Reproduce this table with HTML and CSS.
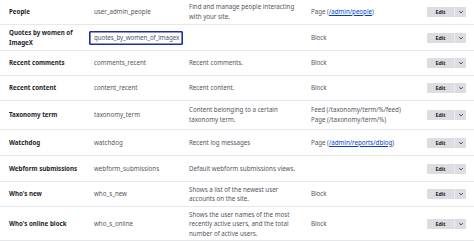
FILE: index.html
```html
<!DOCTYPE html>
<html lang="en">
<head>
  <meta charset="UTF-8">
  <title>Views</title>
  <link rel="stylesheet" href="styles.css">
</head>
<body>
  <table class="views-list">
    <colgroup>
      <col class="c-name">
      <col class="c-machine">
      <col class="c-desc">
      <col class="c-path">
      <col class="c-ops">
    </colgroup>
    <tbody>
      <tr>
        <td class="name">People</td>
        <td class="machine">user_admin_people</td>
        <td>Find and manage people interacting with your site.</td>
        <td>Page (<a href="#">/admin/people</a>)</td>
        <td class="ops"><span class="dropbutton"><span class="db-main">Edit</span><span class="db-toggle"><svg viewBox="0 0 10 10"><path d="M2 3.5 L5 6.5 L8 3.5"/></svg></span></span></td>
      </tr>
      <tr class="r26">
        <td class="name">Quotes by women of ImageX</td>
        <td class="machine has-input"><input class="machine-input" type="text" value="quotes_by_women_of_imagex"></td>
        <td></td>
        <td>Block</td>
        <td class="ops"><span class="dropbutton"><span class="db-main">Edit</span><span class="db-toggle"><svg viewBox="0 0 10 10"><path d="M2 3.5 L5 6.5 L8 3.5"/></svg></span></span></td>
      </tr>
      <tr>
        <td class="name">Recent comments</td>
        <td class="machine">comments_recent</td>
        <td>Recent comments.</td>
        <td>Block</td>
        <td class="ops"><span class="dropbutton"><span class="db-main">Edit</span><span class="db-toggle"><svg viewBox="0 0 10 10"><path d="M2 3.5 L5 6.5 L8 3.5"/></svg></span></span></td>
      </tr>
      <tr>
        <td class="name">Recent content</td>
        <td class="machine">content_recent</td>
        <td>Recent content.</td>
        <td>Block</td>
        <td class="ops"><span class="dropbutton"><span class="db-main">Edit</span><span class="db-toggle"><svg viewBox="0 0 10 10"><path d="M2 3.5 L5 6.5 L8 3.5"/></svg></span></span></td>
      </tr>
      <tr class="r29">
        <td class="name">Taxonomy term</td>
        <td class="machine">taxonomy_term</td>
        <td>Content belonging to a certain taxonomy term.</td>
        <td>Feed (/taxonomy/term/%/feed)<br>Page (/taxonomy/term/%)</td>
        <td class="ops"><span class="dropbutton"><span class="db-main">Edit</span><span class="db-toggle"><svg viewBox="0 0 10 10"><path d="M2 3.5 L5 6.5 L8 3.5"/></svg></span></span></td>
      </tr>
      <tr class="r26">
        <td class="name">Watchdog</td>
        <td class="machine">watchdog</td>
        <td>Recent log messages</td>
        <td>Page (<a href="#">/admin/reports/dblog</a>)</td>
        <td class="ops"><span class="dropbutton"><span class="db-main">Edit</span><span class="db-toggle"><svg viewBox="0 0 10 10"><path d="M2 3.5 L5 6.5 L8 3.5"/></svg></span></span></td>
      </tr>
      <tr class="r26">
        <td class="name">Webform submissions</td>
        <td class="machine">webform_submissions</td>
        <td>Default webform submissions views.</td>
        <td></td>
        <td class="ops"><span class="dropbutton"><span class="db-main">Edit</span><span class="db-toggle"><svg viewBox="0 0 10 10"><path d="M2 3.5 L5 6.5 L8 3.5"/></svg></span></span></td>
      </tr>
      <tr>
        <td class="name">Who's new</td>
        <td class="machine">who_s_new</td>
        <td>Shows a list of the newest user accounts on the site.</td>
        <td>Block</td>
        <td class="ops"><span class="dropbutton"><span class="db-main">Edit</span><span class="db-toggle"><svg viewBox="0 0 10 10"><path d="M2 3.5 L5 6.5 L8 3.5"/></svg></span></span></td>
      </tr>
      <tr>
        <td class="name">Who's online block</td>
        <td class="machine">who_s_online</td>
        <td>Shows the user names of the most recently active users, and the total number of active users.</td>
        <td>Block</td>
        <td class="ops"><span class="dropbutton"><span class="db-main">Edit</span><span class="db-toggle"><svg viewBox="0 0 10 10"><path d="M2 3.5 L5 6.5 L8 3.5"/></svg></span></span></td>
      </tr>
    </tbody>
  </table>
</body>
</html>
```

FILE: styles.css
```css
* {
  margin: 0;
  padding: 0;
  box-sizing: border-box;
}

body {
  background: #fff;
  font-family: "Noto Sans", "Open Sans", sans-serif;
  font-size: 6.2px;
  line-height: 9.6px;
  color: #545560;
  overflow: hidden;
}

.views-list {
  width: 474px;
  margin-top: -1px;
  border-collapse: collapse;
  table-layout: fixed;
}

.c-name { width: 85px; }
.c-machine { width: 100px; }
.c-desc { width: 122px; }
.c-path { width: 116px; }
.c-ops { width: 51px; }

.views-list td {
  height: 25px;
  padding: 3px 4px 2px;
  vertical-align: middle;
  border-bottom: 1px solid #e6e7eb;
}

.views-list .r26 td { height: 26px; }
.views-list .r29 td { height: 29px; }

.views-list td.name {
  padding-left: 9px;
  font-weight: 700;
  color: #232429;
}

.views-list td.machine {
  padding-left: 9px;
}

.views-list td.has-input {
  padding-left: 4px;
}

.machine-input {
  display: block;
  width: 94px;
  height: 14px;
  padding: 0 0 0 4px;
  font: inherit;
  letter-spacing: -0.06px;
  color: #545560;
  border: 1px solid #1f2fa0;
  box-shadow: inset 0 0 0 0.6px #1f2fa0;
  border-radius: 1px;
  outline: none;
}

a {
  color: #003ecc;
  text-decoration: underline;
}

.views-list td.ops {
  padding-left: 4px;
}

.dropbutton {
  display: flex;
  width: 39px;
  height: 10px;
  background: #dcdde1;
  border-radius: 1px;
}

.db-main {
  width: 28px;
  font-size: 5.2px;
  font-weight: 700;
  line-height: 10px;
  text-align: center;
  color: #232429;
  border-right: 1px solid #eeeef1;
}

.db-toggle {
  flex: 1;
  display: flex;
  align-items: center;
  justify-content: center;
}

.db-toggle svg {
  width: 6px;
  height: 6px;
  fill: none;
  stroke: #3b3f57;
  stroke-width: 1.6;
}
```
